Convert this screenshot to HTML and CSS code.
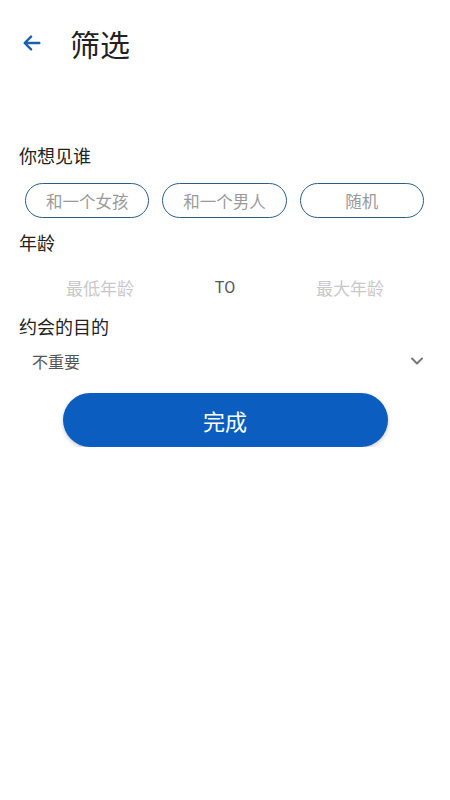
FILE: index.html
```html
<!DOCTYPE html>
<html lang="zh">
<head>
  <meta charset="UTF-8">
  <title>筛选</title>
  <link rel="stylesheet" href="styles.css">
</head>
<body>

  <div class="header">
    <span class="back">
      <svg width="22" height="22" viewBox="0 0 24 24"><path d="M20 12H5M11 5l-7 7 7 7" fill="none" stroke="#1b5fb0" stroke-width="2.6" stroke-linecap="round" stroke-linejoin="round"/></svg>
    </span>
    <h2>筛选</h2>
  </div>

  <div class="section">
    <div class="label">你想见谁</div>
    <div class="chips">
      <div class="chip">和一个女孩</div>
      <div class="chip">和一个男人</div>
      <div class="chip">随机</div>
    </div>
  </div>

  <div class="label age-label">年龄</div>
  <div class="age-row">
    <span class="placeholder">最低年龄</span>
    <span class="to">TO</span>
    <span class="placeholder">最大年龄</span>
  </div>

  <div class="label">约会的目的</div>
  <div class="select">
    <span>不重要</span>
    <svg width="14" height="10" viewBox="0 0 14 10"><path d="M2 2.5l5 5 5-5" fill="none" stroke="#777" stroke-width="2" stroke-linecap="round" stroke-linejoin="round"/></svg>
  </div>

  <button>完成</button>

</body>
</html>
```

FILE: styles.css
```css
body {
  margin: 0;
  padding: 0 19px;
  font-family: "Noto Sans CJK SC", "Noto Sans", sans-serif;
  background-color: #fff;
  color: #222;
}

.header {
  display: flex;
  align-items: center;
  height: 86px;
}

.back {
  display: flex;
  width: 49px;
  margin-left: 2px;
}

.header h2 {
  margin: 0;
  font-size: 30px;
  font-weight: 400;
  color: #222;
}

.section {
  margin-top: 56px;
}

.label {
  font-size: 18px;
  line-height: 26px;
  color: #222;
}

.chips {
  display: flex;
  gap: 13px;
  margin: 15px 7px 0 6px;
}

.chip {
  flex: 1;
  height: 35px;
  border: 1.5px solid #2b5c8c;
  border-radius: 18px;
  box-sizing: border-box;
  display: flex;
  align-items: center;
  justify-content: center;
  font-size: 16.5px;
  color: #9a9a9a;
}

.age-label {
  margin-top: 11px;
}

.age-row {
  display: grid;
  grid-template-columns: repeat(3, 125px);
  justify-content: center;
  justify-items: center;
  align-items: center;
  height: 52px;
  margin-top: 6px;
  font-size: 17px;
}

.placeholder {
  color: #c8c8c8;
}

.to {
  color: #555;
  font-family: "Roboto", sans-serif;
  font-size: 16px;
}

.select {
  display: flex;
  justify-content: space-between;
  align-items: center;
  height: 34px;
  margin: 5px 7px 0 13px;
  font-size: 16px;
  color: #555;
}

button {
  display: block;
  width: 325px;
  height: 54px;
  margin: 15px auto 0;
  border: none;
  border-radius: 27px;
  background-color: #0b5ec0;
  color: #fff;
  font-family: "Noto Sans CJK SC", sans-serif;
  font-size: 22px;
  box-shadow: 0 2px 4px rgba(0, 0, 0, 0.2);
}
```
